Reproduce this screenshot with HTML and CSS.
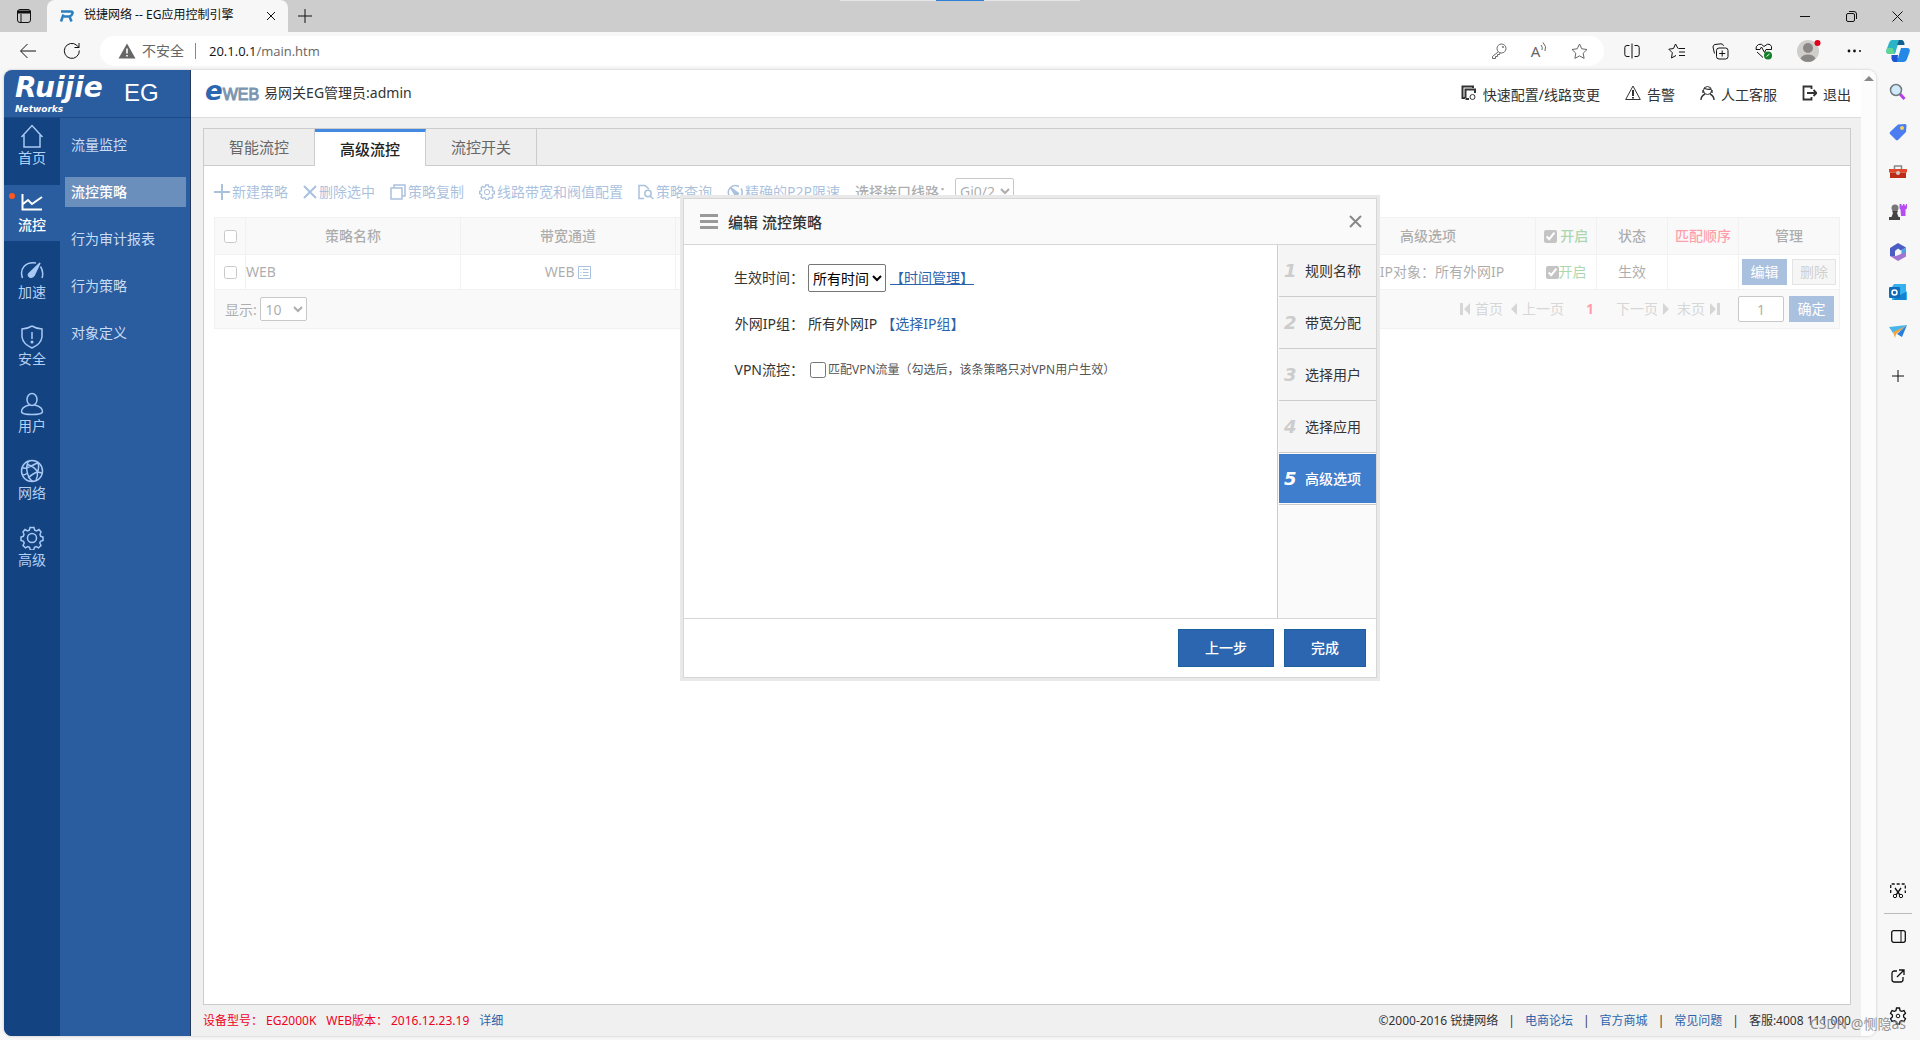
FILE: index.html
```html
<!DOCTYPE html>
<html lang="zh-CN">
<head>
<meta charset="utf-8">
<title>锐捷网络 -- EG应用控制引擎</title>
<link rel="stylesheet" href="styles.css">
</head>
<body>
<div class="tabstrip">
  <button class="strip-btn" aria-label="标签"><svg width="16" height="16" viewBox="0 0 16 16"><rect x="1.500" y="1.500" width="13" height="13" rx="2.500"/><path d="M1.500 3h13v2h-13z" fill="#111"/><path d="M5 6v8"/></svg></button>
  <div class="browser-tab">
    <svg class="favicon" width="15" height="12" viewBox="0 0 15 12"><path d="M2 1.500h9.500q2.500 0 2 2T10.500 6.500l2 5M5 6.500h6M4.500 4.500L2 11.500" fill="none" stroke="#2b7fc0" stroke-width="2.500"/></svg>
    <span class="tab-title">锐捷网络 -- EG应用控制引擎</span>
    <button class="tab-close" aria-label="关闭标签"><svg width="10" height="10" viewBox="0 0 10 10"><path d="M1 1l8 8M9 1l-8 8"/></svg></button>
  </div>
  <button class="new-tab" aria-label="新标签"><svg width="14" height="14" viewBox="0 0 14 14"><path d="M7 0v14M0 7h14"/></svg></button>
  <div class="drag-hint"></div>
  <div class="win-controls">
    <button aria-label="最小化"><svg width="10" height="10" viewBox="0 0 10 10"><path d="M0 5.500h10"/></svg></button>
    <button aria-label="还原"><svg width="11" height="11" viewBox="0 0 11 11"><rect x=".5" y="2.500" width="8" height="8" rx="1.500"/><path d="M3 .5h5q2.500 0 2.500 2.500v5"/></svg></button>
    <button aria-label="关闭"><svg width="11" height="11" viewBox="0 0 11 11"><path d="M.5.5l10 10M10.500.5l-10 10"/></svg></button>
  </div>
</div>

<div class="browser-bar">
  <button aria-label="后退"><svg width="18" height="16" viewBox="0 0 18 16"><path d="M17 8H2M8.500 1L1.500 8l7 7"/></svg></button>
  <button aria-label="刷新"><svg width="18" height="18" viewBox="0 0 18 18"><path d="M16.300 8.500A7.500 7.500 0 1 1 13.800 3.300L16 5.500M16 1v4.500h-4.500"/></svg></button>
  <div class="address">
    <svg class="solid" width="18" height="16" viewBox="0 0 18 16"><path d="M9 .5L17.500 15.500H.5z" fill="#666"/><path d="M9 5.500v5M9 12v1.500" stroke="#fff" stroke-width="1.600"/></svg>
    <span class="insecure">不安全</span>
    <span class="url"><b>20.1.0.1</b>/main.htm</span>
    <div class="address-tools">
      <button aria-label="密码"><svg width="16" height="16" viewBox="0 0 16 16"><circle cx="10.500" cy="5.500" r="4.500"/><circle cx="12" cy="4" r=".6"/><path d="M7 9l-5.500 4.500v2h3v-2h2v-2h2L9 10"/></svg></button>
      <button class="read" aria-label="朗读"><span>A</span><svg width="7" height="10" viewBox="0 0 7 10"><path d="M1 3q2 2 1 5M3 .5q4 4 2 8.500"/></svg></button>
      <button aria-label="收藏"><svg width="17" height="17" viewBox="0 0 17 17"><path d="M8.500 1l2.300 4.800 5.200.7-3.800 3.700.9 5.200-4.600-2.500-4.600 2.500.9-5.200L1 6.500l5.200-.7z"/></svg></button>
    </div>
  </div>
  <button aria-label="拆分窗口"><svg width="16" height="16" viewBox="0 0 16 16"><path d="M5.500 2.500H3Q.8 2.500.8 4.500v7q0 2 2.200 2h2.500M10.500 2.500H13q2.200 0 2.200 2v7q0 2-2.200 2h-2.500M8 .5v15"/></svg></button>
  <button aria-label="收藏夹"><svg width="17" height="16" viewBox="0 0 17 16"><path d="M10 5.500L7.500 1 5.500 5.500.8 6.200l3.500 3.500L3.500 15l4.500-2.500M10.500 5.500H17M11 9h6M11 12.500h6"/></svg></button>
  <button aria-label="集锦"><svg width="17" height="17" viewBox="0 0 17 17"><rect x="4.500" y="5" width="11.500" height="11" rx="2.500"/><path d="M10.200 7.500v6M7.200 10.500h6M2.500 10.500L1 4q0-2 2-2.500L9 .8q2 0 2.500 2"/></svg></button>
  <button aria-label="浏览器概要"><svg width="18" height="17" viewBox="0 0 18 17"><path d="M9 3.500Q6.500 0 3.500 1.500T1 6.500h4l1.500-2.500 3 5.500 1.500-3h5.500q.8-3.500-1.500-5T9 3.500M2 9l6 5.500"/><circle cx="13" cy="12.500" r="4" fill="#15802a" stroke="none"/><path d="M11.500 13.500l3-2.500" stroke="#fff"/></svg></button>
  <button class="profile" aria-label="用户资料"><svg class="solid" width="24" height="24" viewBox="0 0 24 24"><circle cx="11" cy="12" r="11" fill="#d0cecb"/><circle cx="11" cy="9" r="5" fill="#8a8886"/><path d="M3.500 19.500q2-4 7.500-4t7.500 4q-3 3.500-7.500 3.500t-7.500-3.500" fill="#8a8886"/><circle cx="20.500" cy="4" r="3" fill="#e3001b"/></svg></button>
  <button aria-label="更多"><svg class="solid" width="14" height="4" viewBox="0 0 14 4"><g fill="#111"><circle cx="2" cy="2" r="1.400"/><circle cx="7.500" cy="2" r="1.400"/><circle cx="13" cy="2" r="1"/></g></svg></button>
  <button aria-label="Copilot"><svg class="solid" width="24" height="22" viewBox="0 0 24 22"><path d="M6 0h9q3 0 3.500 4H12L9 14H3Q-1 14 .8 9L3 3q.8-3 3-3" fill="#2bb3c6"/><path d="M1 8h5.500L9 14H3Q-1 14 1 8" fill="#62d691"/><path d="M18 22H9q-3 0-3.500-4H12l3-10h6q4 0 2.200 5L21 19q-.8 3-3 3" fill="#2388e6"/><path d="M13 0h2q3 0 3.500 5H11z" fill="#12608f"/><path d="M5.500 15H12l-1 7H9q-3 0-3.500-4z" fill="#2153d1"/></svg></button>
</div>

<div class="workspace">
  <div class="page">
    <aside class="left">
      <div class="brand"><span class="brand-mark"><span class="brand-name">Ruijie</span><span class="brand-sub">Networks</span></span><span class="brand-model">EG</span></div>
      <div class="menus">
        <nav class="main-nav">
          <a href="#"><svg width="24" height="24" viewBox="0 0 24 24"><path d="M1.500 13L12 1.500 22.500 13M4 11v12h16V11"/></svg>首页</a>
          <a href="#" class="on"><svg width="24" height="24" viewBox="0 0 24 24"><path d="M2.500 3v15.500H22M3 13l5-4 4 4 10-7"/></svg>流控</a>
          <a href="#"><svg width="24" height="24" viewBox="0 0 24 24"><path d="M2.500 20Q0 13 4 8.500T16 5M20.500 8.500q3.500 5.500 1.500 11.500"/><path d="M8.500 16L20 5l-6 12.500q-2 2.500-4 1.500T8.500 16" fill="#a9c9f5"/></svg>加速</a>
          <a href="#"><svg width="24" height="24" viewBox="0 0 24 24"><path d="M12 1q5 3 10 3v8q-1 7-10 11Q3 19 2 12V4q5 0 10-3M12 7v7"/><circle cx="12" cy="17" r=".8"/></svg>安全</a>
          <a href="#"><svg width="24" height="24" viewBox="0 0 24 24"><ellipse cx="12" cy="7.500" rx="5" ry="6"/><path d="M9.500 13Q1 15 1.500 20q.5 2.500 10.500 2.500T22.500 20q.5-5-8-7"/></svg>用户</a>
          <a href="#"><svg width="24" height="24" viewBox="0 0 24 24"><circle cx="12" cy="12" r="10.500"/><path d="M8.500 2Q5.500 8 7.500 14.500T13 22.500M18 3.500q-5 3-11.500 5.500M7.500 5.500q7 2 10 7.500l4.500 1M17.500 13q-4 1-9.500 6M17.500 13Q19.500 8 18 4M2 16q3 0 5.500-2M2 8q2 2 5 1M17.500 13q.5 4-1.500 8"/></svg>网络</a>
          <a href="#"><svg width="24" height="24" viewBox="0 0 24 24"><circle cx="12" cy="12" r="4.500"/><path d="M10 1.500h4l.7 2.700 1.800.8 2.500-1.500 2 2.500-1 2.500.7 1.800 2.300.7v3.500l-2.500.8-.7 1.700 1.200 2.500-2.500 2.300-2.300-1.300-1.700.7-.8 2.800h-3.400l-.8-2.800-1.700-.7-2.300 1.300L3 19.500 4.200 17l-.7-1.700L1 14.500V11l2.300-.7L4 8.500 3 6l2-2.500L7.500 5l1.800-.8z"/></svg>高级</a>
        </nav>
        <nav class="sub-nav">
          <a href="#">流量监控</a>
          <a href="#" class="on">流控策略</a>
          <a href="#">行为审计报表</a>
          <a href="#">行为策略</a>
          <a href="#">对象定义</a>
        </nav>
      </div>
    </aside>

    <div class="right">
      <header class="top">
        <span class="eweb"><i>e</i>WEB</span>
        <span>易网关EG管理员:admin</span>
        <nav class="top-links">
          <a href="#"><svg width="16" height="16" viewBox="0 0 16 16"><path d="M4 13H1.500V1.500H12V3M4.500 13V4.500H14V8M4.500 14H8" stroke-width="2"/><circle cx="11.500" cy="12" r="2.500"/></svg>快速配置/线路变更</a>
          <a href="#"><svg width="16" height="16" viewBox="0 0 16 16"><path d="M8 1L15.300 14.500H.7z"/><path d="M8 5v6M8 12v1.500" stroke-width="2"/></svg>告警</a>
          <a href="#"><svg width="15" height="16" viewBox="0 0 15 16"><circle cx="7.500" cy="5.500" r="4"/><path d="M4 3q3 2 7 1M1 15q0-4 4-6M14 15q0-4-4-6M3 5v3M12 5v3" stroke-width="1.400"/></svg>人工客服</a>
          <a href="#"><svg width="15" height="16" viewBox="0 0 15 16"><path d="M9.500 4V1.500h-8v13h8V12M5 8h9M11.500 5l3 3-3 3" stroke-width="1.800"/></svg>退出</a>
        </nav>
      </header>

      <main class="content">
        <section class="panel">
          <div class="tabs">
            <button>智能流控</button><button class="on">高级流控</button><button>流控开关</button>
          </div>
          <div class="panel-body">
            <div class="tools">
              <a href="#"><svg width="16" height="16" viewBox="0 0 16 16"><path d="M8 0v16M0 8h16" stroke-width="2"/></svg>新建策略</a>
              <a href="#"><svg width="14" height="14" viewBox="0 0 14 14"><path d="M1 1l12 12M13 1L1 13" stroke-width="2"/></svg>删除选中</a>
              <a href="#"><svg width="16" height="16" viewBox="0 0 16 16"><path d="M4 3.500V1h11v11h-2.500M1 4h11v11H1z"/></svg>策略复制</a>
              <a href="#"><svg width="16" height="16" viewBox="0 0 24 24"><circle cx="12" cy="12" r="4"/><path d="M10 1.500h4l.7 2.700 1.800.8 2.500-1.500 2 2.500-1 2.500.7 1.800 2.300.7v3.500l-2.500.8-.7 1.700 1.200 2.500-2.500 2.300-2.300-1.300-1.700.7-.8 2.800h-3.400l-.8-2.800-1.700-.7-2.300 1.300L3 19.500 4.200 17l-.7-1.700L1 14.500V11l2.300-.7L4 8.500 3 6l2-2.500L7.500 5l1.800-.8z" stroke-width="2"/></svg>线路带宽和阀值配置</a>
              <a href="#"><svg width="16" height="16" viewBox="0 0 16 16"><path d="M6 14.500H1V1.500h6l4 3.500M15.500 15L12 12"/><circle cx="10" cy="9.500" r="3.200"/></svg>策略查询</a>
              <a href="#"><svg width="16" height="16" viewBox="0 0 16 16"><path d="M3 13.500Q-.5 8 3 4t9-1.500M14 4.500q3 5-1 9.500"/><path d="M3.500 3.500l8 6-2.500 3z" fill="#2b64ad"/></svg>精确的P2P限速</a>
              <label class="line-pick"><b>选择接口线路：</b><select><option>Gi0/2</option></select></label>
            </div>
            <table class="policies">
              <colgroup><col class="c-check"><col><col><col><col><col><col><col class="c-enable"><col class="c-state"><col class="c-state"><col class="c-manage"></colgroup>
              <thead><tr>
                <th><input type="checkbox" aria-label="全选"></th><th>策略名称</th><th>带宽通道</th><th></th><th></th><th></th><th>高级选项</th>
                <th><label class="enable"><input type="checkbox" checked> 开启</label></th><th>状态</th><th class="order">匹配顺序</th><th>管理</th>
              </tr></thead>
              <tbody><tr>
                <td><input type="checkbox" aria-label="选择 WEB"></td><td class="name">WEB</td>
                <td>WEB <svg class="detail" width="13" height="13" viewBox="0 0 13 13"><path d="M.5.5h12v12H.5zM2.500 3.500h1M5 3.500h5.500M2.500 6.500h1M5 6.500h5.500M2.500 9.500h1M5 9.500h5.500"/></svg></td>
                <td></td><td></td><td></td><td>外网IP对象：所有外网IP</td>
                <td><label class="enable"><input type="checkbox" checked>开启</label></td><td>生效</td><td></td>
                <td><div class="row-actions"><button class="primary">编辑</button><button class="muted">删除</button></div></td>
              </tr></tbody>
              <tfoot><tr><td colspan="11"><div class="pager">
                <label>显示: <select class="page-size"><option>10</option></select></label>
                <div class="pages">
                  <a href="#"><svg width="10" height="12" viewBox="0 0 10 12"><path d="M0 0h3v12H0zM10 0v12L4 6z"/></svg>首页</a>
                  <a href="#"><svg width="6" height="12" viewBox="0 0 6 12"><path d="M6 0v12L0 6z"/></svg>上一页</a>
                  <b class="current">1</b>
                  <a href="#">下一页<svg width="6" height="12" viewBox="0 0 6 12"><path d="M0 0v12l6-6z"/></svg></a>
                  <a href="#">末页<svg width="10" height="12" viewBox="0 0 10 12"><path d="M7 0h3v12H7zM0 0v12l6-6z"/></svg></a>
                </div>
                <input class="page-no" type="text" value="1" aria-label="页码"><button class="primary">确定</button>
              </div></td></tr></tfoot>
            </table>
            <div class="mask"></div>

            <div class="dialog" role="dialog" aria-labelledby="dlg-title">
              <div class="dialog-inner">
                <div class="dialog-head">
                  <svg width="18" height="15" viewBox="0 0 18 15"><path d="M0 1.500h18M0 7.500h18M0 13.500h18" stroke="#999" stroke-width="3"/></svg>
                  <h2 id="dlg-title">编辑 流控策略</h2>
                  <button aria-label="关闭"><svg width="13" height="13" viewBox="0 0 13 13"><path d="M1 1l11 11M12 1L1 12" stroke="#888" stroke-width="2"/></svg></button>
                </div>
                <div class="dialog-main">
                  <form class="fields">
                    <label for="time">生效时间：</label>
                    <div><select id="time"><option>所有时间</option></select><a href="#" class="underlined">【时间管理】</a></div>
                    <span>外网IP组：</span>
                    <div>所有外网IP<a href="#" class="pick">【选择IP组】</a></div>
                    <label for="vpn">VPN流控：</label>
                    <div><input type="checkbox" id="vpn"><label for="vpn" class="hint">匹配VPN流量（勾选后，该条策略只对VPN用户生效）</label></div>
                  </form>
                  <ol class="steps">
                    <li><i>1</i>规则名称</li><li><i>2</i>带宽分配</li><li><i>3</i>选择用户</li><li><i>4</i>选择应用</li><li class="on"><i>5</i><span>高级选项</span></li>
                  </ol>
                </div>
                <div class="dialog-foot"><button class="prev">上一步</button><button>完成</button></div>
              </div>
            </div>
          </div>
        </section>
        <footer class="foot">
          <div class="device"><span class="pair"><span>设备型号：</span><span>EG2000K</span></span><span class="pair"><span>WEB版本：</span><span>2016.12.23.19</span></span><a href="#">详细</a></div>
          <div class="legal"><span>©2000-2016 锐捷网络</span><span>|</span><a href="#">电商论坛</a><span>|</span><a href="#">官方商城</a><span>|</span><a href="#">常见问题</a><span>|</span><span>客服:4008 111 000</span></div>
        </footer>
      </main>
    </div>
    <div class="scroll"><span class="up"></span></div>
  </div>

  <aside class="edge">
    <button aria-label="搜索"><svg width="18" height="18" viewBox="0 0 18 18"><path d="M11 11l4.500 5" stroke="#b63df0" stroke-width="3"/><circle cx="7" cy="7" r="5.500" fill="#cfeafa" stroke="#70777d" stroke-width="1.500"/></svg></button>
    <button aria-label="购物"><svg class="solid" width="18" height="18" viewBox="0 0 18 18"><path d="M9 1.500L16 1q1.500 0 1.500 1.500L17 9l-8 8q-1 .8-2 0L1 11q-.8-1 0-2z" fill="#4c7df0"/><circle cx="13" cy="5" r="2" fill="#f4cf5a"/></svg></button>
    <button aria-label="工具"><svg class="solid" width="18" height="16" viewBox="0 0 18 16"><path d="M5.500 5V2h7v3" stroke="#888" stroke-width="1.500"/><path d="M0 5h18v3.500H0z" fill="#e2472b"/><path d="M1 8.500h16V14H1z" fill="#bd2c17"/><circle cx="9" cy="9" r="2" fill="#ccc"/></svg></button>
    <button aria-label="游戏"><svg class="solid" width="18" height="18" viewBox="0 0 18 18"><circle cx="6" cy="5" r="3.500" fill="#777"/><path d="M3 8h6l-1 2 1.500 4H11v3H0v-3h2.500L4 10z" fill="#444"/><path d="M10.500 1h2v1.500h1.500V1h1.500v1.500H17V1h1v4.500l-1.500 1V13H12L11.500 6.500l-1-1z" fill="#b64df2"/></svg></button>
    <button aria-label="Microsoft 365"><svg class="solid" width="18" height="18" viewBox="0 0 18 18"><path d="M9 0l8 4.500-5 3L9 5.500 6 8v6L1 13V5z" fill="#4b5cc4"/><path d="M17 4.500V10l-6 3 1.500-3V7z" fill="#4ba2e8"/><path d="M17 9v4.500L9 18l-8-5h6l5-2z" fill="#a175d1"/></svg></button>
    <button aria-label="Outlook"><svg class="solid" width="18" height="18" viewBox="0 0 18 18"><path d="M5 1h12v7l1 1v8H3V4z" fill="#35b1ee"/><path d="M9 13l8-4v8H4z" fill="#1681cf"/><rect y="4" width="11" height="11" rx="1" fill="#0f6cbd"/><circle cx="5.500" cy="9.500" r="2.500" stroke="#fff" stroke-width="1.500"/></svg></button>
    <button aria-label="发送"><svg class="solid" width="18" height="14" viewBox="0 0 18 14"><path d="M0 2L18 0l-7 6-7 2z" fill="#49b5ec"/><path d="M18 0l-5 12-5-3z" fill="#2a7fdb"/><path d="M4 7l12-5.500L7 9l-1 4z" fill="#f2a33a"/></svg></button>
    <button class="add" aria-label="添加"><svg width="12" height="12" viewBox="0 0 12 12"><path d="M6 0v12M0 6h12"/></svg></button>
    <div class="edge-bottom">
      <button aria-label="截图"><svg width="16" height="16" viewBox="0 0 16 16"><path d="M.7 10V1h14.600v9" stroke-dasharray="3 2" stroke-width="1.300"/><path d="M5 5l5 7M11 5l-5 7" stroke-width="1.300"/><circle cx="5" cy="13" r="1.700"/><circle cx="11" cy="13" r="1.700"/></svg></button>
      <hr>
      <button aria-label="侧栏"><svg width="15" height="13" viewBox="0 0 15 13"><rect x=".7" y=".7" width="13.600" height="11.600" rx="2" stroke-width="1.300"/><path d="M10 1v11"/></svg></button>
      <button aria-label="外部打开"><svg width="14" height="14" viewBox="0 0 14 14"><path d="M6 2H3.500Q1 2 1 4.500v6Q1 13 3.500 13h6q2.500 0 2.500-2.500V8M8 1h5v5M13 1L6 8" stroke-width="1.300"/></svg></button>
      <button aria-label="设置"><svg width="18" height="18" viewBox="0 0 18 18"><circle cx="9" cy="9" r="1.800"/><path d="M7.500 1h3l.5 2.500 1.500.9 2.500-.8 1.500 2.700-1.900 1.700v2l1.900 1.700-1.500 2.700-2.500-.8-1.500.9-.5 2.500h-3L7 14.500l-1.500-.9-2.500.8-1.500-2.700L3.400 10V8L1.500 6.300 3 3.600l2.500.8L7 3.500z" stroke-width="1.300"/></svg></button>
    </div>
  </aside>
  <div class="watermark">CSDN @恻隐as</div>
</div>
</body>
</html>
```
FILE: styles.css
```css
* { box-sizing: border-box; }
body {
  margin: 0;
  min-height: 100vh;
  display: flex;
  flex-direction: column;
  background: #f7f7f7;
  color: #333;
  font: 14px/20px "Noto Sans", "Noto Sans CJK SC", sans-serif;
}
button, select, input { font: inherit; color: inherit; margin: 0; }
button { border: 0; padding: 0; background: none; }
a { color: #2b64ad; text-decoration: none; }
svg { fill: none; stroke: currentColor; flex: none; }
.solid { stroke: none; }

/* browser chrome */
.tabstrip { display: flex; align-items: stretch; height: 32px; background: #cdcdcd; color: #111; position: relative; }
.tabstrip button, .browser-bar button, .edge button { display: flex; align-items: center; justify-content: center; }
.strip-btn { width: 47px; }
.browser-tab { display: flex; align-items: center; width: 241px; padding: 0 10px 0 12px; border-radius: 8px 8px 0 0; background: #f7f7f7; font-size: 12px; }
.tab-title { margin-left: 10px; padding-bottom: 2px; flex: 1; white-space: nowrap; }
.tab-close { width: 14px; }
.new-tab { width: 34px; }
.drag-hint { position: absolute; top: 0; left: 50%; width: 240px; margin-left: -120px; height: 1px; background: linear-gradient(90deg, #e6e6e6 96px, #2f7fd8 96px, #2f7fd8 144px, #e6e6e6 144px); }
.win-controls { display: flex; margin-left: auto; }
.win-controls button { width: 46px; }
.browser-bar { display: flex; align-items: center; height: 38px; padding-left: 6px; color: #111; }
.browser-bar > button { width: 44px; height: 30px; }
.browser-bar > .profile { width: 46px; }
.address { flex: 1; display: flex; align-items: center; height: 30px; margin: 0 6px; padding: 0 5px 0 18px; border-radius: 15px; background: #fff; color: #666; }
.insecure { margin-left: 6px; padding-right: 11px; border-right: 1px solid #888; line-height: 16px; }
.url { margin-left: 13px; font-family: "Open Sans", sans-serif; font-size: 13px; }
.url b { font-weight: 400; color: #111; }
.address-tools { display: flex; margin-left: auto; color: #666; }
.address-tools button { width: 40px; height: 30px; }
.read { font-size: 15px; }
.read svg { margin-bottom: 8px; }

.workspace { flex: 1; display: flex; position: relative; padding: 0 0 4px 4px; }
.page { flex: 1; min-width: 0; display: flex; border-radius: 8px; overflow: hidden; background: #f0f0f0; box-shadow: 0 0 2px 1px #ddd; }
.scroll { width: 15px; background: #fcfcfc; padding: 6px 3px; }
.up { display: block; width: 0; border: 5px solid transparent; border-top: 0; border-bottom-color: #888; }

.edge { width: 44px; display: flex; flex-direction: column; align-items: center; padding-top: 2px; color: #111; }
.edge button { width: 44px; height: 40px; }
.edge .add { height: 48px; }
.edge-bottom { margin-top: auto; display: flex; flex-direction: column; align-items: center; }
.edge hr { width: 28px; margin: 2px 0; border: 0; border-top: 1px solid #bbb; }
.watermark { position: absolute; right: 14px; bottom: 6px; color: #777; opacity: .8; text-shadow: 0 0 1px #fff; }

/* left menus */
.left { width: 187px; display: flex; flex-direction: column; background: #2a5d9f; border-right: 1px solid #24395c; }
.brand { height: 48px; display: flex; align-items: center; padding: 0 0 2px 11px; gap: 15px; color: #fff; border-bottom: 1px solid #1d4a87; }
.brand-mark { display: flex; flex-direction: column; width: 94px; font-family: "DejaVu Sans", sans-serif; font-weight: 700; font-style: italic; }
.brand-name { font-size: 28px; line-height: 32px; }
.brand-sub { font-size: 9px; line-height: 10px; }
.brand-model { font: 24px/24px "Liberation Sans", sans-serif; }
.menus { flex: 1; display: flex; }
.main-nav { width: 56px; display: flex; flex-direction: column; gap: 11px; background: #134380; }
.main-nav a { position: relative; height: 56px; display: flex; flex-direction: column; align-items: center; padding-top: 6px; color: #b5d0f5; }
.main-nav svg { stroke-width: 1.500; stroke: #a9c9f5; }
.main-nav .on { background: #2a5d9f; color: #fff; font-weight: 500; }
.main-nav .on svg { stroke: #fff; stroke-width: 2; }
.main-nav .on::before { content: ""; position: absolute; left: 5px; top: 8px; width: 6px; height: 6px; border-radius: 50%; background: #ff5722; }
.sub-nav { flex: 1; display: flex; flex-direction: column; gap: 17px; padding: 12px 4px 0 5px; }
.sub-nav a { height: 30px; padding-left: 6px; line-height: 29px; color: #c9dcf5; }
.sub-nav .on { background: #6b8fbd; color: #fff; font-weight: 500; }

/* header */
.right { flex: 1; min-width: 0; display: flex; flex-direction: column; }
.top { height: 48px; display: flex; align-items: center; padding: 0 10px 2px 14px; gap: 5px; background: #fff; border-bottom: 1px solid #ddd; }
.eweb { display: flex; align-items: baseline; font: 16px/24px "Liberation Sans", sans-serif; color: #7b96b0; -webkit-text-stroke: 1px #7b96b0; }
.eweb i { font: italic 700 26px/24px "DejaVu Sans", sans-serif; color: #2d66b0; -webkit-text-stroke: 0; }
.top-links { display: flex; gap: 25px; margin-left: auto; padding-top: 5px; }
.top-links a { display: flex; gap: 6px; color: #333; }

/* panel and tabs */
.content { flex: 1; display: flex; flex-direction: column; padding: 10px 10px 0 12px; }
.panel { flex: 1; display: flex; flex-direction: column; border: 1px solid #ccc; background: #fff; }
.tabs { display: flex; height: 37px; background: #eee; border-bottom: 1px solid #ccc; }
.tabs button { width: 111px; border-right: 1px solid #ccc; font-size: 15px; color: #666; }
.tabs .on { height: 37px; border-top: 3px solid #4489e0; background: #fff; color: #222; font-weight: 500; }
.panel-body { position: relative; flex: 1; padding: 0 10px; }
.mask { position: absolute; inset: 0; background: rgba(255, 255, 255, .6); }
.tools { display: flex; align-items: center; gap: 15px; height: 51px; }
.tools a, .line-pick { display: flex; align-items: center; gap: 2px; white-space: nowrap; }
.tools svg { stroke-width: 1.500; }
.line-pick b { font-weight: 500; }
.line-pick select { width: 59px; height: 27px; padding: 0; }
select, .page-no { border: 1px solid #767676; border-radius: 2px; background: #fff; }

.policies { width: 100%; table-layout: fixed; border-collapse: collapse; }
.policies th, .policies td { padding: 0; border: 1px solid #ddd; text-align: center; font-weight: 400; }
.policies th { height: 37px; background: #f1f1f1; font-weight: 500; }
.policies tbody td { height: 35px; }
.policies tfoot td { height: 39px; background: #f1f1f1; }
.policies .name { text-align: left; }
.policies .order { color: #ff0a2f; }
.c-check { width: 31px; }
.c-enable { width: 61px; }
.c-state { width: 71px; }
.c-manage { width: 101px; }
input[type="checkbox"] { width: 13px; height: 13px; accent-color: #6b6b6b; vertical-align: middle; }
.policies input[type="checkbox"] { vertical-align: -2px; }
.enable { color: #2f9a35; }
.detail { vertical-align: -2px; color: #2b64ad; }
.row-actions { display: flex; gap: 5px; padding-left: 3px; }
.primary { width: 45px; height: 26px; background: #2a64ad; color: #fff; }
.muted { width: 44px; height: 26px; border: 1px solid #bbb; background: #e8e8e8; color: #888; }
.pager { display: flex; align-items: center; gap: 5px; padding: 0 5px 0 10px; }
.pager label { margin-right: auto; }
.page-size { width: 47px; height: 24px; }
.pages { display: flex; align-items: center; gap: 8px; padding-right: 13px; color: #999; }
.pages a { display: flex; align-items: center; gap: 5px; color: #999; }
.pages svg { fill: #999; stroke: none; }
.current { margin: 0 14px; color: #ff0a2f; }
.page-no { width: 46px; height: 26px; padding: 0; text-align: center; }

/* step dialog */
.dialog { position: absolute; left: calc(50% - 347px); top: 29px; width: 700px; padding: 3px; background: #e9e9e9; }
.dialog-inner { border: 1px solid #d6d6d6; background: #fff; }
.dialog-head { display: flex; align-items: center; gap: 10px; height: 46px; padding: 0 14px 0 16px; background: #fafafa; border-bottom: 1px solid #d6d6d6; }
.dialog-head h2 { flex: 1; margin: 0; font-size: 15px; font-weight: 500; }
.dialog-head button { display: flex; }
.dialog-main { display: flex; min-height: 373px; }
.fields { flex: 1; display: grid; grid-template-columns: 120px 1fr; grid-auto-rows: 46px; column-gap: 4px; align-content: start; align-items: center; padding-top: 10px; }
.fields > label, .fields > span { text-align: right; }
.fields > div { display: flex; align-items: center; }
.fields select { width: 78px; height: 28px; color: #000; }
.fields input { width: 16px; height: 16px; margin: 0 2px; }
.hint { font-size: 12px; color: #555; }
.underlined { margin-left: 4px; text-decoration: underline; }
.pick { margin-left: 4px; }
.steps { width: 99px; margin: 0; padding: 0 0 0 1px; list-style: none; background: #fafafa; border-left: 1px solid #ccc; }
.steps li { display: flex; align-items: center; height: 52px; padding-left: 5px; gap: 7px; background: #f5f5f5; border-bottom: 1px solid #ccc; }
.steps i { width: 14px; font: italic 700 18px/20px "DejaVu Sans", sans-serif; color: #ccc; }
.steps .on { background: #3f7dcd content-box; padding: 1px 0; color: #fff; font-weight: 500; }
.steps .on i { width: 19px; padding-left: 5px; color: #fff; }
.dialog-foot { display: flex; justify-content: flex-end; gap: 10px; padding: 10px; border-top: 1px solid #d6d6d6; }
.dialog-foot button { width: 82px; height: 38px; border: 1px solid #1c619f; background: #2d66b0; color: #fff; font-weight: 500; }
.dialog-foot .prev { width: 96px; }

/* footer */
.foot { display: flex; justify-content: space-between; height: 31px; align-items: center; font-size: 12px; white-space: nowrap; }
.device, .legal { display: flex; gap: 10px; }
.device { color: #f0001c; }
.pair { display: flex; gap: 3px; }
```
